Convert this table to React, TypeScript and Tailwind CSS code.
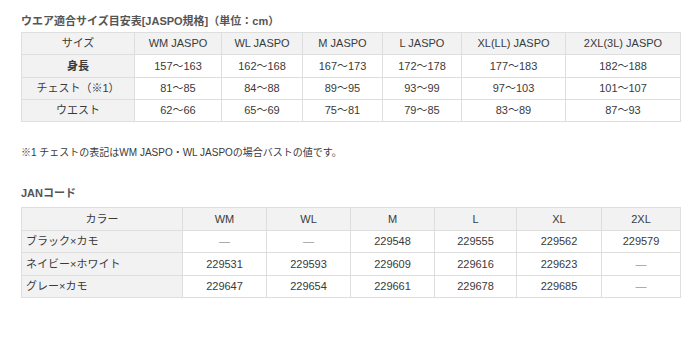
import React from 'react';

const sizeCols = [113, 87, 81, 80, 79, 104, 115];
const sizeHead = ['サイズ', 'WM JASPO', 'WL JASPO', 'M JASPO', 'L JASPO', 'XL(LL) JASPO', '2XL(3L) JASPO'];
const sizeRows = [
  { label: '身長', bold: true, h: 'h-[23px]', values: ['157〜163', '162〜168', '167〜173', '172〜178', '177〜183', '182〜188'] },
  { label: 'チェスト（※1）', bold: false, h: 'h-[22px]', values: ['81〜85', '84〜88', '89〜95', '93〜99', '97〜103', '101〜107'] },
  { label: 'ウエスト', bold: false, h: 'h-[22px]', values: ['62〜66', '65〜69', '75〜81', '79〜85', '83〜89', '87〜93'] },
];

const janCols = [161, 84, 84, 84, 82, 85, 79];
const janHead = ['カラー', 'WM', 'WL', 'M', 'L', 'XL', '2XL'];
const janRows = [
  { label: 'ブラック×カモ', values: ['—', '—', '229548', '229555', '229562', '229579'] },
  { label: 'ネイビー×ホワイト', values: ['229531', '229593', '229609', '229616', '229623', '—'] },
  { label: 'グレー×カモ', values: ['229647', '229654', '229661', '229678', '229685', '—'] },
];

export default function App() {
  return (
    <div
      className="w-[700px] h-[346px] bg-white text-[#3a3a3a] overflow-hidden pl-[21px] pt-[14px]"
      style={{ fontFamily: '"Liberation Sans", "Noto Sans CJK JP", sans-serif' }}
    >
      <h2 className="text-[11px] font-bold text-[#555] leading-[14px] mb-[4px]">
        ウエア適合サイズ目安表[JASPO規格]（単位：cm）
      </h2>

      <table className="table-fixed border-collapse w-[660px] text-[11px]">
        <colgroup>
          {sizeCols.map((w, i) => (
            <col key={i} style={{ width: w }} />
          ))}
        </colgroup>
        <thead>
          <tr className="h-[22px] bg-[#f2f2f2]">
            {sizeHead.map((h) => (
              <th key={h} className="border border-[#dedede] font-normal text-center">
                {h}
              </th>
            ))}
          </tr>
        </thead>
        <tbody>
          {sizeRows.map((r) => (
            <tr key={r.label} className={r.h}>
              <td className={`border border-[#dedede] bg-[#f2f2f2] text-center ${r.bold ? 'font-bold' : ''}`}>
                {r.label}
              </td>
              {r.values.map((v, i) => (
                <td key={i} className="border border-[#dedede] text-center">
                  {v}
                </td>
              ))}
            </tr>
          ))}
        </tbody>
      </table>

      <p className="text-[10px] leading-[14px] mt-[24px]">
        ※1 チェストの表記はWM JASPO・WL JASPOの場合バストの値です。
      </p>

      <h2 className="text-[11px] font-bold text-[#555] leading-[14px] mt-[26px] mb-[7px]">JANコード</h2>

      <table className="table-fixed border-collapse w-[659px] text-[11px]">
        <colgroup>
          {janCols.map((w, i) => (
            <col key={i} style={{ width: w }} />
          ))}
        </colgroup>
        <thead>
          <tr className="h-[23px] bg-[#f2f2f2]">
            {janHead.map((h) => (
              <th key={h} className="border border-[#dedede] font-normal text-center">
                {h}
              </th>
            ))}
          </tr>
        </thead>
        <tbody>
          {janRows.map((r, idx) => (
            <tr key={r.label} className={idx === 1 ? 'h-[23px]' : 'h-[22px]'}>
              <td className="border border-[#dedede] bg-[#f2f2f2] text-left pl-[4px]">{r.label}</td>
              {r.values.map((v, i) => (
                <td key={i} className={`border border-[#dedede] text-center ${v === '—' ? 'text-[#999]' : ''}`}>
                  {v}
                </td>
              ))}
            </tr>
          ))}
        </tbody>
      </table>
    </div>
  );
}
